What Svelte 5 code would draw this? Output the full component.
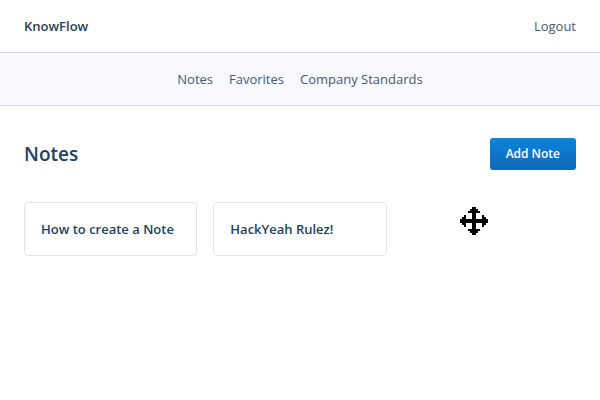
<script>
  const links = ['Notes', 'Favorites', 'Company Standards'];
  const notes = ['How to create a Note', 'HackYeah Rulez!'];
</script>

<header class="topbar">
  <a class="brand" href="#home">KnowFlow</a>
  <a href="#logout">Logout</a>
</header>

<nav class="subnav">
  {#each links as link}
    <a href="#{link}">{link}</a>
  {/each}
</nav>

<main>
  <div class="heading">
    <h1>Notes</h1>
    <button type="button">Add Note</button>
  </div>
  <div class="grid">
    {#each notes as note}
      <a class="card" href="#note">{note}</a>
    {/each}
  </div>
</main>

<svg class="cursor" viewBox="0 0 14 14" shape-rendering="crispEdges" aria-hidden="true">
  <path d="M6 0h2v1h1v1h1v1H8v3h3V4h1v1h1v1h1v2h-1v1h-1v1h-1V8H8v3h2v1H9v1H8v1H6v-1H5v-1H4v-1h2V8H3v2H2V9H1V8H0V6h1V5h1V4h1v2h3V3H4V2h1V1h1z" />
</svg>

<style>
  :global(body) {
    background: #fff;
    color: #243f5c;
    font-family: "Open Sans", "Noto Sans", sans-serif;
    font-size: 13px;
    line-height: 20px;
  }

  a {
    color: #435b73;
    text-decoration: none;
  }

  .topbar {
    display: flex;
    align-items: center;
    justify-content: space-between;
    padding: 16px 24px;
    border-bottom: 1px solid #d2d6e4;
  }

  .topbar .brand {
    color: #243f5c;
    font-weight: 600;
  }

  .subnav {
    display: flex;
    justify-content: center;
    gap: 16px;
    padding: 16px 24px;
    background: #f8f9fd;
    border-bottom: 1px solid #d2d6e4;
  }

  main {
    padding: 32px 24px;
  }

  .heading {
    display: flex;
    align-items: center;
    justify-content: space-between;
    margin-bottom: 32px;
  }

  h1 {
    margin: 0;
    font-size: 19px;
    font-weight: 600;
    line-height: 32px;
  }

  button {
    height: 32px;
    padding: 0 16px;
    border: 0;
    border-radius: 3px;
    background: linear-gradient(#0a84dc, #1068b8);
    color: #fff;
    font: 600 12px/20px "Open Sans", "Noto Sans", sans-serif;
  }

  .grid {
    display: grid;
    grid-template-columns: repeat(3, 1fr);
    gap: 16px;
  }

  .card {
    padding: 16px;
    border: 1px solid #e1e3e8;
    border-radius: 4px;
    color: #243f5c;
    font-weight: 600;
  }

  .cursor {
    position: absolute;
    left: 460px;
    top: 207px;
    width: 28px;
    height: 28px;
    fill: #000;
  }
</style>
